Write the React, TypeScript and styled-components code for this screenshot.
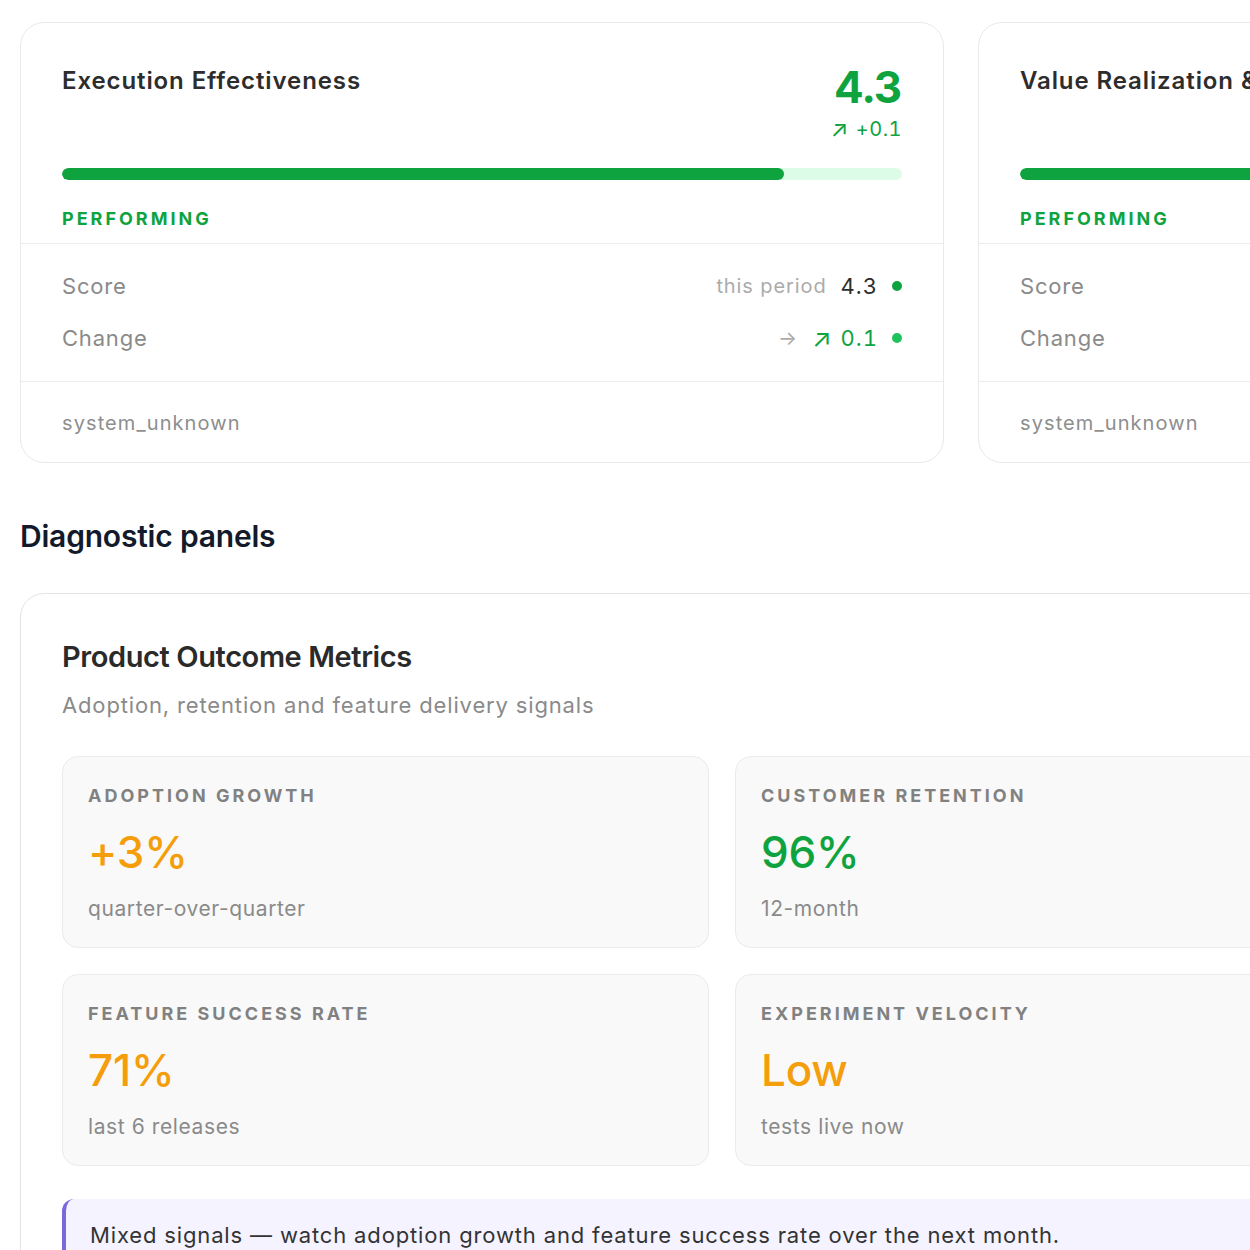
import React from "react";
import styled, { createGlobalStyle } from "styled-components";

const GlobalStyle = createGlobalStyle`
  html, body {
    margin: 0;
    padding: 0;
    background: #ffffff;
    overflow: hidden;
  }
  body {
    font-family: Inter, "Noto Sans", "Liberation Sans", sans-serif;
    color: #2b2b2b;
    -webkit-font-smoothing: antialiased;
  }
  *, *::before, *::after {
    box-sizing: border-box;
  }
`;

const GREEN = "#0fa340";
const GREEN_LIGHT = "#20c25a";
const ORANGE = "#f59e0b";

const Page = styled.div`
  width: 1900px;
  padding: 22px 0 40px 20px;
  display: flex;
  flex-direction: column;
`;

const CardRow = styled.div`
  display: flex;
  gap: 34px;
`;

const Card = styled.section`
  width: 924px;
  flex: none;
  border: 1.5px solid #e9e9e9;
  border-radius: 24px;
  background: #fff;
  display: flex;
  flex-direction: column;
`;

const CardHead = styled.div`
  padding: 42px 41px 13px 41px;
  display: flex;
  flex-direction: column;
`;

const TitleRow = styled.div`
  display: flex;
  justify-content: space-between;
  align-items: flex-start;
`;

const CardTitle = styled.h3`
  margin: 0;
  font-size: 24px;
  line-height: 32px;
  font-weight: 600;
  color: #2d2d2d;
  letter-spacing: 0.9px;
  white-space: nowrap;
`;

const ScoreBlock = styled.div`
  display: flex;
  flex-direction: column;
  align-items: flex-end;
`;

const ScoreValue = styled.div`
  font-size: 44px;
  line-height: 44px;
  font-weight: 700;
  color: ${GREEN};
  letter-spacing: -0.5px;
  font-variant-numeric: tabular-nums;
`;

const ScoreDelta = styled.div`
  margin-top: 8px;
  font-size: 20px;
  line-height: 24px;
  color: ${GREEN};
  letter-spacing: 0.5px;
  font-variant-numeric: tabular-nums;
  display: flex;
  align-items: center;
  gap: 7px;
`;

const Track = styled.div`
  margin-top: 27px;
  height: 12px;
  border-radius: 6px;
  background: #dcfce7;
  overflow: hidden;
`;

const Fill = styled.div`
  height: 100%;
  border-radius: 6px;
  background: ${GREEN};
`;

const StatusLabel = styled.div<{ $color: string }>`
  margin-top: 28px;
  font-size: 18px;
  line-height: 22px;
  font-weight: 700;
  letter-spacing: 3px;
  color: ${(p) => p.$color};
`;

const Rows = styled.div`
  border-top: 1.5px solid #ececec;
  padding: 27px 41px 28px 41px;
  display: flex;
  flex-direction: column;
  gap: 22px;
`;

const Row = styled.div`
  display: flex;
  justify-content: space-between;
  align-items: center;
  height: 30px;
`;

const RowLabel = styled.span`
  font-size: 22px;
  color: #8a8a8a;
  letter-spacing: 0.8px;
`;

const RowValues = styled.span`
  display: flex;
  align-items: center;
  gap: 14px;
`;

const Muted = styled.span`
  font-size: 20px;
  color: #ababab;
  letter-spacing: 0.9px;
`;

const Strong = styled.span<{ $color?: string }>`
  font-size: 22px;
  color: ${(p) => p.$color || "#2e2e2e"};
  letter-spacing: 1px;
  font-variant-numeric: tabular-nums;
  display: flex;
  align-items: center;
  gap: 8px;
`;

const Dot = styled.span<{ $color: string }>`
  width: 10px;
  height: 10px;
  border-radius: 50%;
  background: ${(p) => p.$color};
`;

const Footer = styled.div`
  border-top: 1.5px solid #ececec;
  padding: 27px 41px 25px 41px;
  font-size: 20px;
  line-height: 28px;
  color: #8e8e8e;
  letter-spacing: 1.1px;
`;

const SectionHeading = styled.h2`
  margin: 55px 0 39px 0;
  font-size: 30px;
  line-height: 36px;
  font-weight: 600;
  color: #121a2c;
  letter-spacing: -0.2px;
`;

const Panel = styled.section`
  width: 1407px;
  border: 1.5px solid #e4e4e4;
  border-radius: 24px;
  padding: 45px 41px 40px 41px;
  display: flex;
  flex-direction: column;
`;

const PanelTitle = styled.h3`
  margin: 0;
  font-size: 29px;
  line-height: 36px;
  font-weight: 600;
  color: #2a2a2a;
  letter-spacing: -0.4px;
`;

const PanelSub = styled.p`
  margin: 15px 0 0 0;
  font-size: 22px;
  line-height: 30px;
  color: #8a8a8a;
  letter-spacing: 0.85px;
`;

const MetricGrid = styled.div`
  margin-top: 36px;
  display: grid;
  grid-template-columns: 647px 647px;
  gap: 26px;
`;

const Tile = styled.div`
  height: 192px;
  background: #f9f9f9;
  border: 1.5px solid #ebebeb;
  border-radius: 16px;
  padding: 28px 25px 24px 25px;
  display: flex;
  flex-direction: column;
`;

const TileLabel = styled.div`
  font-size: 18px;
  line-height: 22px;
  font-weight: 700;
  letter-spacing: 3px;
  color: #818181;
`;

const TileValue = styled.div<{ $color: string }>`
  margin-top: 19px;
  font-size: 44px;
  line-height: 52px;
  font-weight: 500;
  color: ${(p) => p.$color};
  letter-spacing: -0.2px;
`;

const TileSub = styled.div`
  margin-top: 17px;
  font-size: 21px;
  line-height: 28px;
  color: #8a8a8a;
  letter-spacing: 0.6px;
`;

const Callout = styled.div`
  margin-top: 33px;
  background: #f5f3ff;
  border-left: 4px solid #7a69d8;
  border-radius: 12px;
  padding: 20px 24px 20px 24px;
  font-size: 22px;
  line-height: 32px;
  color: #333;
  letter-spacing: 0.85px;
`;

/* Trend arrow glyph, drawn a touch larger than the figures beside it */
const Arrow = styled.span<{ $color: string }>`
  color: ${(p) => p.$color};
  font-size: 1.15em;
  line-height: 1;
`;

type Dimension = {
  title: string;
  score: number;
  delta: number;
};

const dimensions: Dimension[] = [
  { title: "Execution Effectiveness", score: 4.3, delta: 0.1 },
  { title: "Value Realization & Impact", score: 4.3, delta: 0.1 },
];

type Metric = { label: string; value: string; note: string; color: string };

const metrics: Metric[] = [
  { label: "ADOPTION GROWTH", value: "+3%", note: "quarter-over-quarter", color: ORANGE },
  { label: "CUSTOMER RETENTION", value: "96%", note: "12-month", color: GREEN },
  { label: "FEATURE SUCCESS RATE", value: "71%", note: "last 6 releases", color: ORANGE },
  { label: "EXPERIMENT VELOCITY", value: "Low", note: "tests live now", color: ORANGE },
];

function DimensionCard({ d }: { d: Dimension }) {
  return (
    <Card>
      <CardHead>
        <TitleRow>
          <CardTitle>{d.title}</CardTitle>
          <ScoreBlock>
            <ScoreValue>{d.score.toFixed(1)}</ScoreValue>
            <ScoreDelta>
              <Arrow $color={GREEN}>↗</Arrow>
              <span>+{d.delta.toFixed(1)}</span>
            </ScoreDelta>
          </ScoreBlock>
        </TitleRow>
        <Track>
          <Fill style={{ width: `${(d.score / 5) * 100}%` }} />
        </Track>
        <StatusLabel $color={GREEN}>PERFORMING</StatusLabel>
      </CardHead>
      <Rows>
        <Row>
          <RowLabel>Score</RowLabel>
          <RowValues>
            <Muted>this period</Muted>
            <Strong>{d.score.toFixed(1)}</Strong>
            <Dot $color={GREEN} />
          </RowValues>
        </Row>
        <Row>
          <RowLabel>Change</RowLabel>
          <RowValues>
            <Muted>→</Muted>
            <Strong $color={GREEN}>
              <Arrow $color={GREEN}>↗</Arrow>
              <span>{d.delta.toFixed(1)}</span>
            </Strong>
            <Dot $color={GREEN_LIGHT} />
          </RowValues>
        </Row>
      </Rows>
      <Footer>system_unknown</Footer>
    </Card>
  );
}

export default function App() {
  return (
    <>
      <GlobalStyle />
      <Page>
        <CardRow>
          {dimensions.map((d) => (
            <DimensionCard key={d.title} d={d} />
          ))}
        </CardRow>
        <SectionHeading>Diagnostic panels</SectionHeading>
        <Panel>
          <PanelTitle>Product Outcome Metrics</PanelTitle>
          <PanelSub>Adoption, retention and feature delivery signals</PanelSub>
          <MetricGrid>
            {metrics.map((m) => (
              <Tile key={m.label}>
                <TileLabel>{m.label}</TileLabel>
                <TileValue $color={m.color}>{m.value}</TileValue>
                <TileSub>{m.note}</TileSub>
              </Tile>
            ))}
          </MetricGrid>
          <Callout>
            Mixed signals — watch adoption growth and feature success rate over the next month.
          </Callout>
        </Panel>
      </Page>
    </>
  );
}
